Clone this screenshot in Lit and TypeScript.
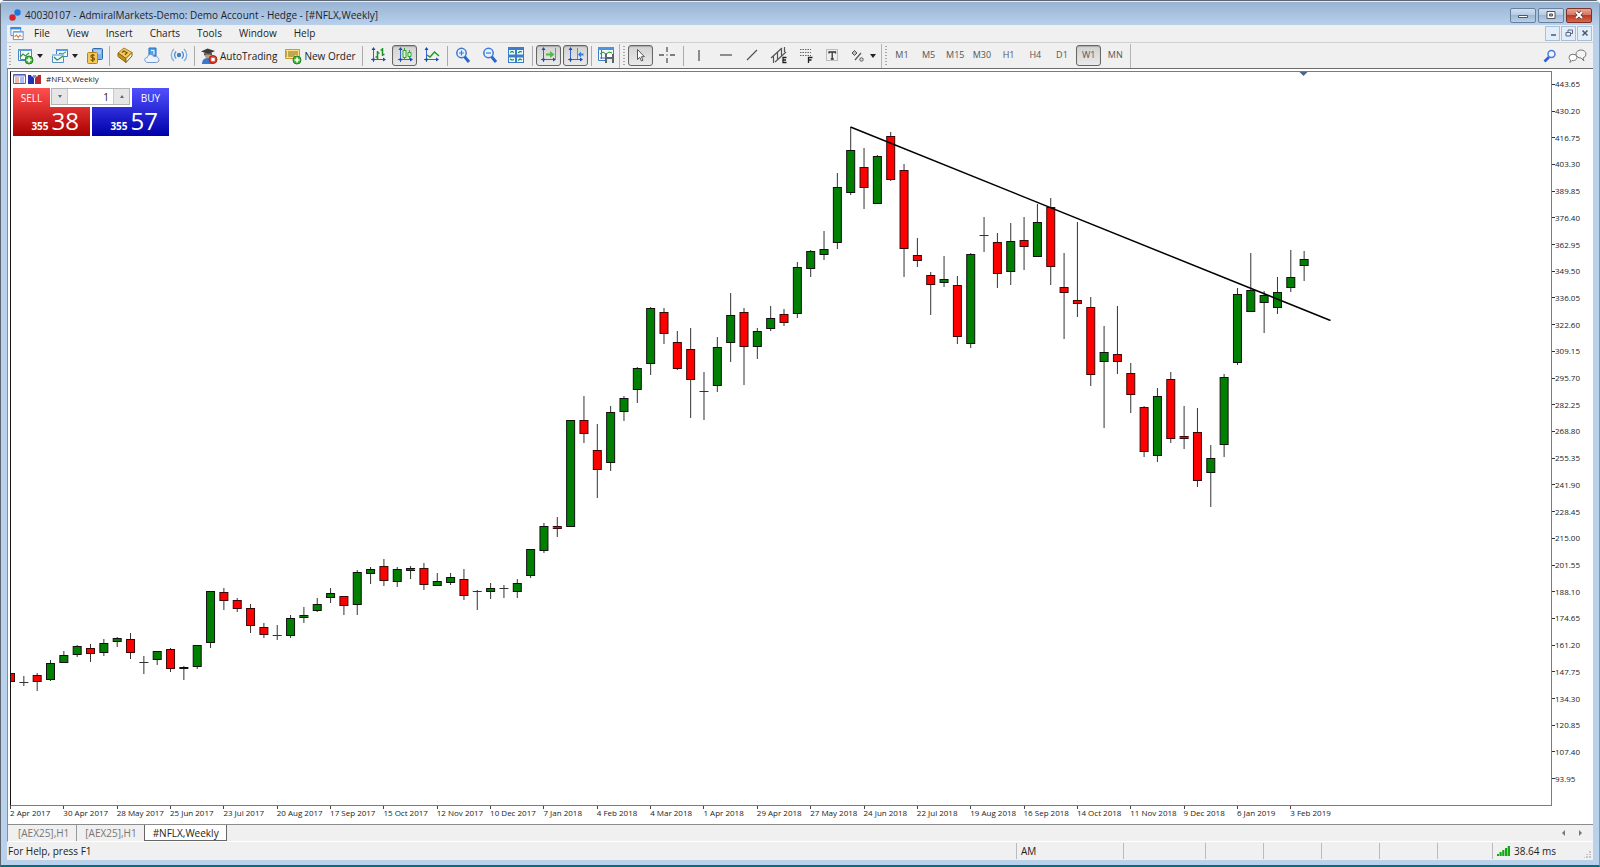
import { LitElement, html, svg, css } from "lit";
import { customElement, state } from "lit/decorators.js";
import { classMap } from "lit/directives/class-map.js";

type Candle = [kind: "g" | "r" | "d", top: number, bottom: number, high: number, low: number];

/* Body top, body bottom, high and low of each weekly bar, in plot pixels from the top of the window. */
const CANDLES: Candle[] = [
  ["r", 673, 682, 673, 682], ["d", 682, 683, 676, 686], ["r", 675, 682, 673, 691], ["g", 663, 680, 660, 681],
  ["g", 655, 663, 651, 663], ["g", 646, 655, 645, 657], ["r", 648, 654, 644, 662], ["g", 643, 653, 639, 656],
  ["g", 638, 642, 637, 647], ["r", 639, 653, 633, 659], ["d", 662, 663, 656, 674], ["g", 651, 660, 651, 665],
  ["r", 649, 669, 648, 672], ["g", 667, 669, 666, 680], ["g", 645, 667, 645, 669], ["g", 591, 643, 591, 648],
  ["r", 592, 601, 588, 610], ["r", 600, 609, 598, 612], ["r", 608, 626, 604, 633], ["r", 627, 635, 623, 638],
  ["d", 635, 636, 625, 640], ["g", 618, 636, 615, 638], ["g", 615, 618, 607, 623], ["g", 604, 611, 598, 612],
  ["g", 593, 598, 588, 603], ["r", 596, 606, 596, 615], ["g", 572, 605, 570, 615], ["g", 569, 574, 567, 584],
  ["r", 566, 581, 559, 586], ["g", 569, 582, 567, 587], ["g", 568, 571, 566, 579], ["r", 568, 585, 563, 590],
  ["g", 581, 586, 573, 586], ["g", 577, 583, 573, 585], ["r", 579, 596, 569, 600], ["d", 591, 592, 590, 610],
  ["g", 588, 592, 583, 599], ["d", 588, 589, 585, 598], ["g", 583, 592, 579, 598], ["g", 549, 576, 549, 578],
  ["g", 526, 551, 523, 553], ["r", 526, 529, 517, 537], ["g", 420, 527, 420, 527], ["r", 420, 434, 396, 443],
  ["r", 450, 470, 424, 498], ["g", 412, 463, 406, 471], ["g", 398, 412, 396, 421], ["g", 368, 390, 367, 403],
  ["g", 308, 364, 307, 375], ["r", 312, 334, 308, 344], ["r", 342, 369, 331, 370], ["r", 349, 380, 328, 418],
  ["d", 391, 392, 372, 420], ["g", 347, 386, 337, 392], ["g", 315, 343, 293, 362], ["r", 312, 347, 308, 385],
  ["g", 331, 347, 328, 359], ["g", 318, 329, 306, 331], ["r", 314, 323, 309, 326], ["g", 267, 314, 262, 318],
  ["g", 251, 269, 250, 277], ["g", 249, 255, 231, 260], ["g", 187, 243, 173, 249], ["g", 150, 193, 127, 195],
  ["r", 167, 188, 148, 209], ["g", 156, 204, 155, 204], ["r", 136, 180, 132, 181], ["r", 170, 249, 164, 277],
  ["r", 255, 261, 238, 267], ["r", 275, 285, 272, 315], ["g", 279, 283, 256, 287], ["r", 285, 337, 276, 344],
  ["g", 254, 344, 253, 348], ["d", 235, 236, 217, 252], ["r", 242, 274, 233, 288], ["g", 241, 272, 223, 285],
  ["r", 240, 247, 217, 270], ["g", 222, 257, 204, 257], ["r", 207, 267, 198, 285], ["r", 287, 293, 253, 339],
  ["r", 300, 304, 222, 317], ["r", 307, 375, 297, 386], ["g", 352, 362, 326, 428], ["r", 354, 362, 306, 374],
  ["r", 373, 395, 363, 413], ["r", 407, 452, 406, 457], ["g", 396, 456, 388, 462], ["r", 379, 439, 372, 443],
  ["r", 436, 439, 406, 449], ["r", 432, 481, 408, 487], ["g", 458, 473, 445, 507], ["g", 377, 445, 374, 457],
  ["g", 294, 363, 288, 365], ["g", 290, 312, 253, 312], ["g", 295, 303, 291, 333], ["g", 292, 308, 277, 314],
  ["g", 277, 288, 250, 292], ["g", 259, 266, 251, 281],
];

const PITCH = 1280.3 / 96;
const TOP = 72;

const DATES = [
  "2 Apr 2017", "30 Apr 2017", "28 May 2017", "25 Jun 2017", "23 Jul 2017", "20 Aug 2017", "17 Sep 2017",
  "15 Oct 2017", "12 Nov 2017", "10 Dec 2017", "7 Jan 2018", "4 Feb 2018", "4 Mar 2018", "1 Apr 2018",
  "29 Apr 2018", "27 May 2018", "24 Jun 2018", "22 Jul 2018", "19 Aug 2018", "16 Sep 2018", "14 Oct 2018",
  "11 Nov 2018", "9 Dec 2018", "6 Jan 2019", "3 Feb 2019",
];

const PRICES = [
  "443.65", "430.20", "416.75", "403.30", "389.85", "376.40", "362.95", "349.50", "336.05", "322.60", "309.15",
  "295.70", "282.25", "268.80", "255.35", "241.90", "228.45", "215.00", "201.55", "188.10", "174.65", "161.20",
  "147.75", "134.30", "120.85", "107.40", "93.95",
];

const axes = svg`<path d="M3.5 1v14M1 12.5h14" stroke="#3a62c8" fill="none"/><path d="M3.5 0l-2 3h4zM16 12.5l-3-2v4z" fill="#2347b0"/><circle cx="3.500" cy="12.500" r="1.300" fill="#2347b0"/>`;
const plus = svg`<circle cx="12" cy="12" r="4" fill="#46b83a" stroke="#1f8420"/><path d="M12 9.500v5M9.500 12h5" stroke="#fff" stroke-width="1.600"/>`;

const ICONS: Record<string, unknown> = {
  newChart: svg`<path d="M1.500 1.500h13v11h-13z" fill="#f4faff" stroke="#4a83c4"/><path d="M1 1h14v2H1z" fill="#5c9ce0"/><path d="M3.500 3v8.500H13" stroke="#5a7ea8" fill="none"/><path d="M3 9l3-3 2.500 2L12 5" stroke="#2e9a3c" stroke-width="1.300" fill="none"/>${plus}`,
  profiles: svg`<path d="M4.500 1.500h11v7h-11z" fill="#eef6ff" stroke="#3f7ec6"/><path d="M4 1h12v2H4z" fill="#5c9ce0"/><path d="M6 7l2-2 2 1 4-2" stroke="#2e9a3c" fill="none"/><path d="M.5 6.500h11v8H.5z" fill="#eef6ff" stroke="#5b8bbd"/><path d="M0 6h12v2H0z" fill="#9cc3ea"/><path d="M2 9l3 3 2-1 4-3" stroke="#2e9a3c" stroke-width="1.300" fill="none"/>`,
  market: svg`<rect x="5.500" y=".5" width="10" height="11" rx="1" fill="#7fb2ec" stroke="#2f69b8"/><path d="M7 3h7M7 5h7" stroke="#d9ebff"/><rect x=".5" y="4.500" width="10" height="11" rx="1" fill="#f3c95a" stroke="#b58413"/><path d="M7.500 7.500c-1-1-3.600-.8-3.600.8 0 1.700 3.600 1 3.600 2.800 0 1.600-2.700 1.700-3.800.5M5.700 6v8" stroke="#80570a" fill="none" stroke-width="1.200"/>`,
  book: svg`<path d="M1 6l6-5 8 4.500-6 6z" fill="#f0c95c" stroke="#a8801d"/><path d="M1 6l8 5.500v4L1 9.500z" fill="#c8921c" stroke="#8a640c"/><path d="M9 11.500l6-6v3.500l-6 6.500z" fill="#fbf3d8" stroke="#8a640c"/><path d="M5 5.500l2-1.500 3 1.800-2 2" stroke="#7a560a" stroke-width="1.300" fill="none"/>`,
  cloud: svg`<path d="M5 1h7v8H5z" fill="#4da4ee" stroke="#1e6fc0"/><path d="M7 3.500h3v4" stroke="#fff" fill="none"/><path d="M4 15.500c-4 0-4.300-4.700-.8-5 .4-3.600 5.600-4 6.600-.8 4.700-1.700 7.400 5.300 2.700 5.800z" fill="#eaf3fd" stroke="#7396c6"/>`,
  signal: svg`<circle cx="8" cy="8" r="2.200" fill="#3f7fc8"/><path d="M5.200 4.500a4.600 4.600 0 000 7M10.800 4.500a4.600 4.600 0 010 7" stroke="#4a88cf" stroke-width="1.300" fill="none"/><path d="M3 2a8 8 0 000 12M13 2a8 8 0 010 12" stroke="#7facdf" stroke-width="1.300" fill="none"/>`,
  auto: svg`<path d="M1 16c0-4 2-6 6-6s5 2 5 6z" fill="#3c78c8"/><circle cx="7" cy="7" r="3.200" fill="#c99b6a"/><path d="M0 3.500L6.500.5 14 3 7.500 6z" fill="#3a3a3a"/><path d="M3 5v2.500c2-1.500 6-1.500 8 0V4.500L7.500 6z" fill="#555"/><circle cx="12" cy="11.500" r="4" fill="#e0402c" stroke="#a81f12"/><path d="M10.300 9.800h3.400v3.400h-3.400z" fill="#fff"/>`,
  order: svg`<path d="M.5 1.500h14v9H.5z" fill="#fbe287" stroke="#c79b26"/><path d="M3 4h10M3 6h10M3 8h7" stroke="#8a6a16"/><path d="M1 4h1M1 6h1M1 8h1" stroke="#8a6a16"/>${plus}`,
  bars: svg`${axes}<path d="M7.500 4v8M5.500 10h2M7.500 6h2M12.500 1v8M10.500 3h2M12.500 7.500h2" stroke="#1c9222" stroke-width="1.500" fill="none"/>`,
  candles: svg`${axes}<path d="M7.500 1v12M12.500 3v9" stroke="#2ea52e"/><path d="M6 3.500h3v7H6zM11 5.500h3v4h-3z" fill="#dff6d8" stroke="#2ea52e"/>`,
  line: svg`${axes}<path d="M4 8l3 2 4.500-5L16 9" stroke="#1c9a22" stroke-width="1.400" fill="none"/>`,
  zoomIn: svg`<path d="M9 9l5 6" stroke="#2d66c4" stroke-width="3"/><circle cx="6.500" cy="6" r="4.700" fill="#e6f2ff" stroke="#3d78d2" stroke-width="1.500"/><path d="M6.500 3.500v5M4 6h5" stroke="#3d78d2" stroke-width="1.200"/>`,
  zoomOut: svg`<path d="M9 9l5 6" stroke="#2d66c4" stroke-width="3"/><circle cx="6.500" cy="6" r="4.700" fill="#e6f2ff" stroke="#3d78d2" stroke-width="1.500"/><path d="M4 6h5" stroke="#3d78d2" stroke-width="1.200"/>`,
  tile: svg`<path d="M0 0h16v16H0z" fill="#3b7dcc"/><path d="M1 3h6v4.500H1zM9 3h6v4.500H9zM1 10.500h6V15H1zM9 10.500h6V15H9z" fill="#f2faff"/><path d="M2 5.500l2-1 2 1M10 6l2-1.500 2 .5M2 12l2 1 2-.5M10 13.500l2-1.500 2 1" stroke="#1c9222" stroke-width="1.200" fill="none"/>`,
  scroll: svg`${axes}<path d="M15.500 1v11" stroke="#888"/><path d="M6 6.500h4v-2.500l4.500 3.500-4.500 3.500V8.500H6z" fill="#51bd3c"/>`,
  shift: svg`${axes}<path d="M10.500 1v11" stroke="#888"/><path d="M16.500 6.500h-2.500V4.500L11 7.500l3 3V8.500h2.500z" fill="#2f7fe0"/>`,
  template: svg`<path d="M.5 1.500h15v12H.5z" fill="#f3faff" stroke="#3f7ec6"/><path d="M0 0h16v3H0z" fill="#4f93dc"/><path d="M2 7l3-2 3 2 3-2 3 1" stroke="#1c9222" fill="none"/><path d="M3.500 3v9M2 11h5" stroke="#4a6fc0"/><path d="M7 7h9v9H7z" fill="#5d6468"/><path d="M9 7h5v3H9z" fill="#fff"/><path d="M9 12h5v4H9z" fill="#e8eef0"/>`,
  cursor: svg`<path d="M5.500 2.500v10l2.300-2.200 1.600 3.700 1.600-.8-1.600-3.500h3z" fill="#fff" stroke="#555"/>`,
  cross: svg`<path d="M8 0v5M8 11v5M0 8h5M11 8h5" stroke="#555" stroke-width="1.300"/><circle cx="8" cy="8" r=".7" fill="#555"/>`,
  vline: svg`<path d="M8 3v11" stroke="#555" stroke-width="1.300"/>`,
  hline: svg`<path d="M2 8h12" stroke="#555" stroke-width="1.300"/>`,
  trend: svg`<path d="M3 13L13 3" stroke="#555" stroke-width="1.300"/>`,
  channel: svg`<path d="M0 11L11 1M4 15L15 5M2.500 16V9M6.500 12V5M10.500 9V2M13.500 5V0" stroke="#555" stroke-width="1.200"/><path d="M15.500 10.500h-3.500v5h3.500M12 13h3" stroke="#222" stroke-width="1.300" fill="none"/>`,
  fibo: svg`<path d="M2 2.500h11M2 5.500h11M2 8.500h11" stroke="#666" stroke-dasharray="1.500 1"/><path d="M10.500 16v-5.500h4M10.500 13h3" stroke="#222" stroke-width="1.300" fill="none"/>`,
  label: svg`<path d="M2.500 2.500h11v11h-11z" stroke="#888" stroke-dasharray="1 1" fill="none"/><path d="M5 6.500V5h6.500v1.500M8.200 5v7M6.800 12h3" stroke="#333" stroke-width="1.300" fill="none"/>`,
  shapes: svg`<path d="M4.500 2.500L7 5 4.500 7.500 2 5z" fill="#bbb" stroke="#555"/><path d="M5 12l6-7" stroke="#555" stroke-width="1.200"/><circle cx="11.500" cy="11.500" r="1.700" fill="#ddd" stroke="#555"/>`,
  search: svg`<path d="M7 9L2.500 13.500" stroke="#2f5fd0" stroke-width="2.600"/><circle cx="9.500" cy="6" r="3.500" fill="#f2f7ff" stroke="#4a7ae0" stroke-width="1.500"/>`,
  app: svg`<path d="M.5 .5h12v10H.5z" fill="#fff" stroke="#2f7fd8"/><path d="M0 0h13v3H0z" fill="#3a8ae0"/><path d="M3.500 5.500h12v10h-12z" fill="#fff" stroke="#2f7fd8"/><path d="M3 5h13v2H3z" fill="#6aa9ea"/><path d="M5 12l2.500-2 2 3 2-3 2 2" stroke="#e07a3c" stroke-width="1.300" fill="none"/>`,
};

const icon = (name: string) => html`<svg class="icon" viewBox="0 0 16 16" aria-hidden="true">${ICONS[name]}</svg>`;

@customElement("app-root")
export class AppRoot extends LitElement {
  @state() private frame = "W1";

  static styles = css`
    :host {
      display: block;
      height: 100vh;
      font: 10px/14px "Open Sans", "Noto Sans", sans-serif;
      color: #222;
    }
    * { box-sizing: border-box; }
    button, input { font: inherit; color: inherit; margin: 0; padding: 0; border: 0; background: none; }
    svg { display: block; }
    .window {
      display: flex;
      flex-direction: column;
      height: 100%;
      padding: 0 6px 5px;
      background: #b9d1ea;
      border: 1px solid #5e6670;
      border-right-color: #17c3d3;
      border-bottom: 2px solid #0b6d7c;
      border-radius: 5px 5px 0 0;
    }
    .title {
      display: flex;
      align-items: center;
      gap: 4px;
      height: 24px;
      flex: none;
      margin: 0 -6px;
      padding: 4px 1px 0 8px;
      background: linear-gradient(#e4eefa 0 1px, #98b3d3 1px, #b8d0ea);
      color: #1a2430;
    }
    .title h1 { flex: 1; font: inherit; margin: 0; }
    .logo { width: 12px; height: 12px; }
    .caption { display: flex; gap: 2px; margin-right: 6px; }
    .caption button {
      width: 26px;
      height: 15px;
      border: 1px solid #68809c;
      border-radius: 2px;
      background: linear-gradient(#cfdff0, #b3cae4 50%, #9db8d6 50%, #b9d0ea);
      display: grid;
      place-items: center;
    }
    .caption .close { background: linear-gradient(#e3a598, #d4705c 50%, #bd3a22 50%, #d9674b); border-color: #7c3226; }
    .menu {
      display: flex;
      align-items: center;
      height: 18px;
      flex: none;
      background: #f0f0f0;
      border-bottom: 1px solid #d0d0d0;
      padding: 0 0 1px 3px;
    }
    .menu .icon { width: 14px; height: 13px; margin-right: 1px; }
    .menu nav { display: flex; flex: 1; }
    .menu nav button { padding: 0 8px 0 9px; }
    .mdi { display: flex; gap: 1px; padding-right: 1px; }
    .mdi button {
      width: 15px;
      height: 15px;
      border: 1px solid #a9bfd8;
      background: #e3eefb;
      display: grid;
      place-items: center;
    }
    .tools {
      display: flex;
      align-items: center;
      height: 25px;
      flex: none;
      background: #f0f0f0;
    }
    .icon { width: 16px; height: 16px; flex: none; overflow: visible; }
    .group { display: flex; flex: none; height: 22px; }
    .group button {
      flex: 1;
      min-width: 0;
      display: flex;
      align-items: center;
      justify-content: center;
      border: 1px solid transparent;
      border-radius: 3px;
      margin: 0 1px;
      height: 21px;
    }
    .group button.on { border: 1px solid #666; background: linear-gradient(#d2d2d2, #e9e9e9); box-shadow: inset 0 1px 1px #aaa; }
    .one { width: 24px; }
    .two { width: 54px; }
    .three { width: 80px; }
    .six { width: 160px; }
    .nine { width: 240px; color: #555; font-size: 9px; }
    .wide { display: flex; align-items: center; gap: 3px; flex: none; padding: 0 4px; }
    .drop { gap: 4px; width: 34px; }
    .add { width: 35px; }
    .drop::after { content: ""; border: 3px solid transparent; border-top: 4px solid #222; border-bottom: 0; }
    .sep { flex: none; width: 3px; height: 20px; border-left: 1px solid #aaa; margin-left: 2px; }
    .end { flex: none; width: 1px; height: 24px; background: #b4b4b4; margin: 0 1px; }
    .grip { flex: none; width: 2px; height: 20px; margin: 0 2px; background: repeating-linear-gradient(#a8a8a8 0 1px, transparent 1px 3px); }
    .fill { flex: 1; }
    .right { display: flex; align-items: center; gap: 10px; padding-right: 6px; }
    .chat { width: 19px; height: 14px; }
    .work {
      flex: 1;
      min-height: 0;
      display: grid;
      grid-template: minmax(0, 1fr) 18px / minmax(0, 1fr) 41px;
      background: #fff;
      border-top: 1px solid #6c6c6c;
      border-left: 1px solid #8c8c8c;
      padding: 2px 0 0 2px;
      font-size: 8px;
      line-height: 10px;
      color: #222;
    }
    .plot { position: relative; overflow: hidden; border: 1px solid #7c7c7c; border-left-color: #111; }
    .plot > svg { width: 100%; height: 100%; }
    .wick { stroke: #333; }
    .up { fill: #008000; stroke: #111; }
    .down { fill: #ff0000; stroke: #3a0808; }
    .trendline { stroke: #000; stroke-width: 1.5; }
    .prices { display: flex; flex-direction: column; padding-bottom: 14px; }
    .prices span { flex: 1; display: flex; align-items: center; }
    .prices span::before { content: ""; width: 3px; height: 1px; background: #333; }
    .dates { display: flex; overflow: hidden; }
    .dates span { flex: none; width: calc(1280.3px / 24); white-space: nowrap; padding-top: 2px; position: relative; }
    .dates span::before { content: ""; position: absolute; left: 0; top: 0; width: 1px; height: 3px; background: #444; }
    .overlay { position: absolute; left: 2px; top: 1px; width: 156px; }
    .symbol { display: flex; align-items: center; gap: 2px; height: 12px; }
    .symbol span { margin-left: 3px; }
    .trade { display: grid; grid-template-columns: 37px 80px 37px; column-gap: 1px; margin-top: 3px; color: #fff; font-size: 10px; }
    .side { height: 19px; }
    .sell { background: linear-gradient(#ff5050, #e03030); }
    .buy { background: linear-gradient(#5050ff, #3030dd); }
    .volume { display: flex; height: 17px; margin: 0 1px 0 0; border: 1px solid #b4b4b4; background: #fff; color: #222; }
    .volume input { flex: 1; min-width: 0; text-align: right; padding-right: 4px; border: solid #c8c8c8; border-width: 0 1px; outline: 0; }
    .volume button { width: 15px; background: #e6e6e6; display: grid; place-items: center; }
    .quotes { grid-column: 1 / -1; display: flex; gap: 2px; }
    .quotes button { flex: 1; height: 29px; display: flex; justify-content: flex-end; align-items: baseline; gap: 3px; padding-right: 11px; font-weight: 700; line-height: 29px; }
    .quotes b { font-size: 24px; font-weight: 400; line-height: 28px; }
    .bid { background: linear-gradient(#e03030, #aa0000); }
    .ask { background: linear-gradient(#3030dd, #0000a8); }
    .tabs {
      display: flex;
      align-items: flex-start;
      height: 18px;
      flex: none;
      background: #f0f0f0;
      border-top: 1px solid #8c8c8c;
      border-left: 1px solid #8c8c8c;
      border-bottom: 1px solid #fff;
      color: #777;
      line-height: 16px;
    }
    .tabs button { height: 16px; padding: 0 7px 0 8px; }
    .tabs button:first-child { padding-left: 10px; border-right: 1px solid #999; }
    .tabs .active { background: #fff; color: #222; border: 1px solid #666; border-top: 0; height: 16px; }
    .arrows { display: flex; gap: 12px; padding: 5px 10px 0 0; }
    .status { display: flex; height: 18px; flex: none; background: #f0f0f0; align-items: center; padding-left: 1px; }
    .status p { flex: 1; margin: 0; }
    .cell { flex: none; height: 16px; border-left: 1px solid #bbb; padding-left: 4px; line-height: 16px; display: flex; align-items: center; gap: 4px; }
    .session { width: 107px; }
    .clock { width: 82px; }
    .ohlc { width: 58px; }
    .volume-cell { width: 55px; }
    .ping { width: 101px; }
    .resize { margin: 6px 2px 0 auto; }
  `;

  private tool(name: string, label: string, on = false) {
    return html`<button class=${classMap({ on })} aria-label=${label} title=${label}>${icon(name)}</button>`;
  }

  private candle([kind, top, bottom, high, low]: Candle, i: number) {
    const x = i * PITCH - 0.5;
    const cls = kind === "g" ? "up" : "down";
    return svg`
      <line class="wick" x1=${x} x2=${x} y1=${high - TOP} y2=${low - TOP} />
      ${kind === "d"
        ? svg`<line class="wick" x1=${x - 4.5} x2=${x + 4.5} y1=${top - TOP + 0.5} y2=${top - TOP + 0.5} />`
        : svg`<rect class=${cls} x=${x - 4} y=${top - TOP + 0.5} width="8" height=${bottom - top - 1} />`}`;
  }

  private chart() {
    return html`
      <main class="work">
        <section class="plot" aria-label="#NFLX weekly chart">
          <svg role="img" aria-label="Candlestick chart">
            ${CANDLES.map((c, i) => this.candle(c, i))}
            <line class="trendline" x1="839.5" y1="55" x2="1319.5" y2="248.500" />
            <path d="M1288.500 0h8l-4 4z" fill="#4a6888" />
          </svg>
          <div class="overlay">
            <div class="symbol">
              <svg width="13" height="10" viewBox="0 0 13 10"><path d="M.5.5h12v9H.5z" fill="#fff" stroke="#5a5aa8"/><path d="M1 1h11v1.500H1z" fill="#8c9cdc"/><path d="M2 4h4M2 6h4M2 8h4" stroke="#e06a5a"/><path d="M7 4h4M7 6h4M7 8h4" stroke="#5a78e0"/></svg>
              <svg width="13" height="10" viewBox="0 0 13 10"><path d="M0 1h3l1 2 2-2v9H0z" fill="#2030b8"/><path d="M7 1l2 2 1-2h3v9H7z" fill="#b82830"/><path d="M5 1h3v3H5z" fill="#7a90e0"/></svg>
              <span>#NFLX,Weekly</span>
            </div>
            <div class="trade">
              <button class="side sell">SELL</button>
              <div class="volume">
                <button aria-label="Decrease volume"><svg width="6" height="4"><path d="M1 0h4L3 3z" fill="#5a6a8a"/></svg></button>
                <input type="text" value="1" aria-label="Volume" />
                <button aria-label="Increase volume"><svg width="6" height="4"><path d="M1 3h4L3 0z" fill="#5a6a8a"/></svg></button>
              </div>
              <button class="side buy">BUY</button>
              <div class="quotes">
                <button class="bid">355 <b>38</b></button>
                <button class="ask">355 <b>57</b></button>
              </div>
            </div>
          </div>
        </section>
        <div class="prices">${PRICES.map((p) => html`<span>${p}</span>`)}</div>
        <div class="dates">${DATES.map((d) => html`<span>${d}</span>`)}</div>
      </main>`;
  }

  render() {
    return html`
      <div class="window">
        <header class="title">
          <svg class="logo" viewBox="0 0 12 12"><circle cx="3.500" cy="8.500" r="3.200" fill="#d8232a"/><circle cx="8.500" cy="3.500" r="3.200" fill="#1f78e0"/></svg>
          <h1>40030107 - AdmiralMarkets-Demo: Demo Account - Hedge - [#NFLX,Weekly]</h1>
          <div class="caption">
            <button aria-label="Minimize"><svg width="10" height="10"><path d="M.5 5.500h9v2h-9z" fill="#fff" stroke="#555"/></svg></button>
            <button aria-label="Maximize"><svg width="10" height="10"><path d="M1 1.500h8v7H1z" fill="#fff" stroke="#555"/><path d="M3.500 4h3v2h-3z" fill="#9ab" stroke="#555"/></svg></button>
            <button class="close" aria-label="Close"><svg width="10" height="10"><path d="M2 2l6 6M8 2L2 8" stroke="#5a3a38" stroke-width="3.600"/><path d="M2 2l6 6M8 2L2 8" stroke="#fff" stroke-width="2"/></svg></button>
          </div>
        </header>
        <div class="menu">
          ${icon("app")}
          <nav>${["File", "View", "Insert", "Charts", "Tools", "Window", "Help"].map((m) => html`<button>${m}</button>`)}</nav>
          <div class="mdi">
            <button aria-label="Minimize chart"><svg width="8" height="8"><path d="M2 6h5" stroke="#4a5a70" stroke-width="1.500"/></svg></button>
            <button aria-label="Restore chart"><svg width="8" height="8"><path d="M3 3V1h4.500v3.500H6M1 3.500h4.500v3.500H1z" stroke="#5a6a80" fill="none"/></svg></button>
            <button aria-label="Close chart"><svg width="8" height="8"><path d="M1.500 1.500l5 5M6.500 1.500l-5 5" stroke="#4a5a70" stroke-width="1.500"/></svg></button>
          </div>
        </div>
        <div class="tools">
          <i class="grip"></i>
          <button class="wide drop add" aria-label="New chart">${icon("newChart")}</button>
          <button class="wide drop add" aria-label="Profiles">${icon("profiles")}</button>
          <button class="wide" aria-label="Market watch">${icon("market")}</button>
          <i class="sep"></i>
          <div class="group three">${this.tool("book", "Navigator")}${this.tool("cloud", "Virtual hosting")}${this.tool("signal", "Signals")}</div>
          <i class="sep"></i>
          <button class="wide">${icon("auto")}AutoTrading</button>
          <button class="wide">${icon("order")}New Order</button>
          <i class="sep"></i>
          <div class="group three">${this.tool("bars", "Bar chart")}${this.tool("candles", "Candlesticks", true)}${this.tool("line", "Line chart")}</div>
          <i class="sep"></i>
          <div class="group three">${this.tool("zoomIn", "Zoom in")}${this.tool("zoomOut", "Zoom out")}${this.tool("tile", "Tile windows")}</div>
          <i class="sep"></i>
          <div class="group two">${this.tool("scroll", "Auto scroll", true)}${this.tool("shift", "Chart shift", true)}</div>
          <i class="sep"></i>
          <div class="group one">${this.tool("template", "Templates")}</div>
          <i class="end"></i><i class="grip"></i>
          <div class="group two">${this.tool("cursor", "Cursor", true)}${this.tool("cross", "Crosshair")}</div>
          <i class="sep"></i>
          <div class="group six">
            ${this.tool("vline", "Vertical line")}${this.tool("hline", "Horizontal line")}${this.tool("trend", "Trendline")}
            ${this.tool("channel", "Equidistant channel")}${this.tool("fibo", "Fibonacci")}${this.tool("label", "Text")}
          </div>
          <button class="wide drop" aria-label="Objects">${icon("shapes")}</button>
          <i class="end"></i><i class="grip"></i>
          <div class="group nine">
            ${["M1", "M5", "M15", "M30", "H1", "H4", "D1", "W1", "MN"].map(
              (f) => html`<button class=${classMap({ on: f === this.frame })} @click=${() => (this.frame = f)}>${f}</button>`,
            )}
          </div>
          <i class="end"></i>
          <span class="fill"></span>
          <div class="right">
            <button aria-label="Search">${icon("search")}</button>
            <button aria-label="Chat"><svg class="chat" viewBox="0 0 19 14"><path d="M8 5a5 4 0 1110 0 5 4 0 01-3 4l1 3-3-3a5 4 0 01-5-4z" fill="#f4f4f4" stroke="#777"/><path d="M1 8.500a4 3.300 0 118 0 4 3.300 0 01-5 3l-2 2 .5-2.500A4 3.300 0 011 8.500z" fill="#fff" stroke="#777"/></svg></button>
          </div>
        </div>
        ${this.chart()}
        <div class="tabs">
          <button>[AEX25],H1</button><button>[AEX25],H1</button><button class="active">#NFLX,Weekly</button>
          <span class="fill"></span>
          <div class="arrows">
            <svg width="5" height="7"><path d="M4 0v6L1 3z" fill="#777"/></svg>
            <svg width="5" height="7"><path d="M1 0v6l3-3z" fill="#777"/></svg>
          </div>
        </div>
        <footer class="status">
          <p>For Help, press F1</p>
          <span class="cell session">AM</span>
          <span class="cell clock"></span>
          ${["Open", "High", "Low", "Close"].map((name) => html`<span class="cell ohlc" title=${name}></span>`)}
          <span class="cell volume-cell"></span>
          <span class="cell ping">
            <svg width="13" height="10"><path d="M0 8h2v2H0zM2.500 6h2.200v4H2.500zM5.200 4h2.200v6H5.200zM8 2h2.200v8H8zM10.700 0h2.300v10h-2.300z" fill="#14a814"/></svg>38.64 ms
            <svg class="resize" width="7" height="7"><path d="M5 0h2v2H5zM5 3h2v1H5zM2 3h2v1H2zM5 5h2v2H5zM2 5h2v2H2zM0 6h1v1H0z" fill="#c4c4c4"/></svg>
          </span>
        </footer>
      </div>`;
  }
}
